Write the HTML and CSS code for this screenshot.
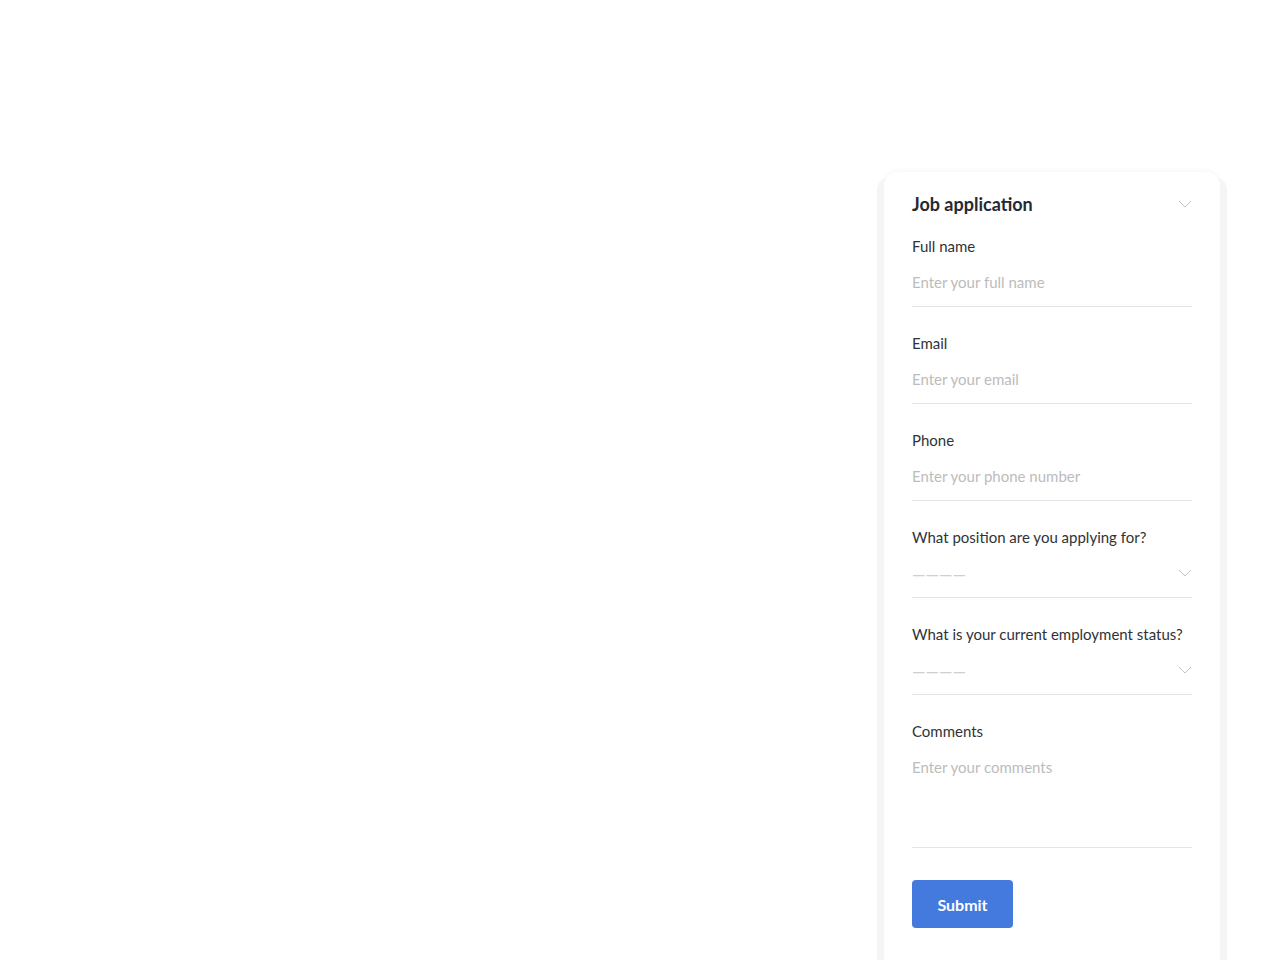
FILE: index.html
```html
<!DOCTYPE html>
<html lang="en">
<head>
<meta charset="UTF-8">
<meta name="viewport" content="width=device-width, initial-scale=1.0">
<title>Job application</title>
<link rel="stylesheet" href="styles.css">
</head>
<body>

<div class="page">
  <form class="card">
    <div class="card-header">
      <h1>Job application</h1>
      <svg class="chevron" width="14" height="8" viewBox="0 0 14 8"><path d="M1 1l6 6 6-6" fill="none" stroke="#c4c4c4" stroke-width="1"/></svg>
    </div>

    <div class="field">
      <label>Full name</label>
      <input class="input" type="text" placeholder="Enter your full name">
    </div>

    <div class="field">
      <label>Email</label>
      <input class="input" type="text" placeholder="Enter your email">
    </div>

    <div class="field">
      <label>Phone</label>
      <input class="input" type="text" placeholder="Enter your phone number">
    </div>

    <div class="field">
      <label>What position are you applying for?</label>
      <div class="input select">
        <span class="dashes">————</span>
        <svg class="chevron" width="14" height="8" viewBox="0 0 14 8"><path d="M1 1l6 6 6-6" fill="none" stroke="#c4c4c4" stroke-width="1"/></svg>
      </div>
    </div>

    <div class="field">
      <label>What is your current employment status?</label>
      <div class="input select">
        <span class="dashes">————</span>
        <svg class="chevron" width="14" height="8" viewBox="0 0 14 8"><path d="M1 1l6 6 6-6" fill="none" stroke="#c4c4c4" stroke-width="1"/></svg>
      </div>
    </div>

    <div class="field">
      <label>Comments</label>
      <textarea class="input textarea" placeholder="Enter your comments"></textarea>
    </div>

    <button type="button" class="btn">Submit</button>
  </form>
</div>

</body>
</html>
```

FILE: styles.css
```css
* {
  box-sizing: border-box;
}
body {
  font-family: Lato, "Noto Sans", Arial, sans-serif;
  background: #ffffff;
  margin: 0;
  height: 960px;
  overflow: hidden;
}
.page {
  display: flex;
  justify-content: flex-end;
  padding: 172px 60px 0 0;
}
.card {
  width: 336px;
  background: #ffffff;
  padding: 20px 28px 40px;
  border-radius: 14px 14px 0 0;
  box-shadow: -8px 4px 0 -1px #f5f5f5, 8px 4px 0 -1px #f5f5f5, 0 -2px 4px rgba(0, 0, 0, 0.03);
  display: flex;
  flex-direction: column;
}
.card-header {
  display: flex;
  justify-content: space-between;
  align-items: center;
  height: 24px;
  margin-bottom: 20px;
}
h1 {
  margin: 0;
  font-size: 18px;
  font-weight: 700;
  color: #262a30;
}
.field {
  display: flex;
  flex-direction: column;
  margin-bottom: 26px;
}
label {
  font-size: 15px;
  line-height: 20px;
  color: #2f3338;
}
.input {
  margin-top: 6px;
  height: 45px;
  padding: 10px 0 14px;
  border: none;
  border-bottom: 1px solid #e4e4e4;
  font-family: inherit;
  font-size: 15px;
  line-height: 20px;
  color: #333;
  outline: none;
  background: transparent;
}
.input::placeholder {
  color: #bcbcbc;
}
.select {
  display: flex;
  justify-content: space-between;
  align-items: center;
  padding: 0;
}
.dashes {
  color: #cfcfcf;
  letter-spacing: 0;
  font-size: 17px;
}
.select .chevron {
  margin-top: -4px;
}
.textarea {
  height: 101px;
  resize: none;
}
.chevron {
  display: block;
}
.btn {
  align-self: flex-start;
  margin-top: 6px;
  width: 101px;
  height: 48px;
  background: #4479dd;
  color: #ffffff;
  border: none;
  border-radius: 4px;
  font-family: inherit;
  font-size: 16px;
  font-weight: 700;
  cursor: pointer;
}
```
